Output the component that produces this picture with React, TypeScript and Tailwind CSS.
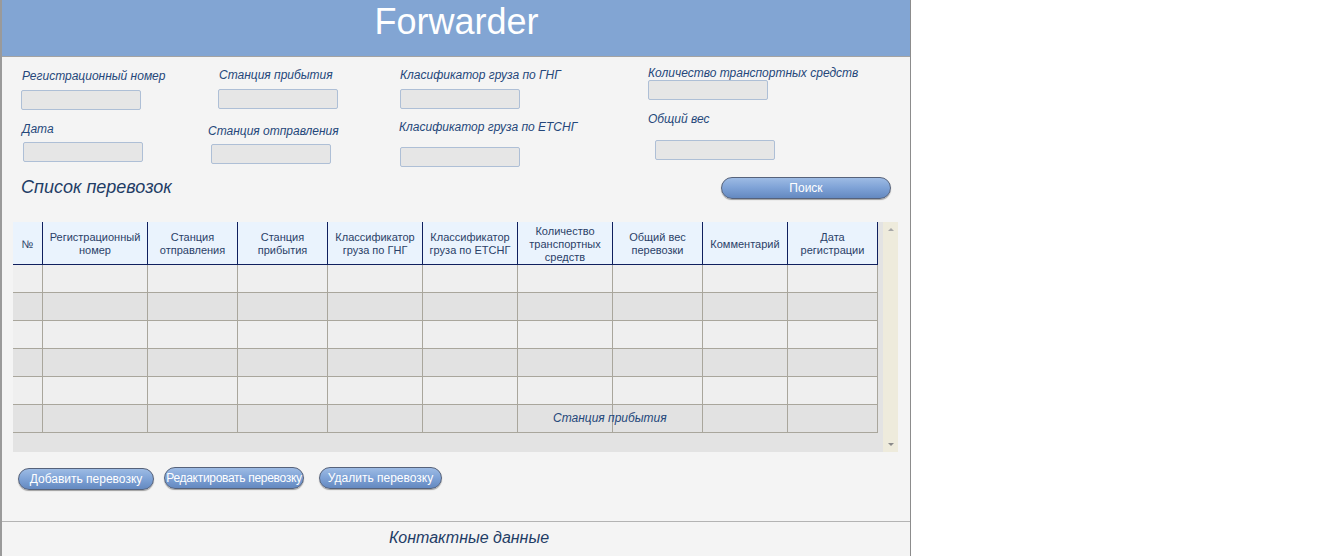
const labelCls = 'block text-[12px] leading-[14px] italic text-[#25477a] whitespace-nowrap'
const inputCls = 'block w-[120px] h-[20px] bg-[#e6e6e6] border border-[#aebfd6] rounded-[2px]'

const columns = [
  { title: '№', w: 'w-[30px]' },
  { title: 'Регистрационный номер', w: 'w-[105px]' },
  { title: 'Станция отправления', w: 'w-[90px]' },
  { title: 'Станция прибытия', w: 'w-[90px]' },
  { title: 'Классификатор груза по ГНГ', w: 'w-[95px]' },
  { title: 'Классификатор груза по ЕТСНГ', w: 'w-[95px]' },
  { title: 'Количество транспортных средств', w: 'w-[95px]' },
  { title: 'Общий вес перевозки', w: 'w-[90px]' },
  { title: 'Комментарий', w: 'w-[85px]' },
  { title: 'Дата регистрации', w: 'w-[90px]' },
]

const rows = [0, 1, 2, 3, 4, 5]

function PillButton({ label, className = '' }: { label: string; className?: string }) {
  return (
    <button
      className={`h-[22px] rounded-full border border-[#56627a] bg-gradient-to-b from-[#9dbbe4] via-[#7ea2d6] to-[#6489c0] text-white text-[12px] leading-[20px] whitespace-nowrap shadow-[0_1px_1px_rgba(0,0,0,0.35)] ${className}`}
    >
      {label}
    </button>
  )
}

export default function App() {
  return (
    <div className="w-[1342px] h-[556px] bg-white overflow-hidden" style={{ fontFamily: '"Liberation Sans", Arial, sans-serif' }}>
      <div className="w-[911px] h-[556px] flex flex-col bg-[#f4f4f4] border-l-2 border-r border-l-[#9a9a9a] border-r-[#8c8c8c]">
        {/* Header */}
        <div className="h-[57px] shrink-0 bg-[#82a5d3] border-b border-[#a3a3a3] flex items-start justify-center">
          <h1 className="text-white text-[36px] leading-[42px] pt-[1px] pl-[1px]">Forwarder</h1>
        </div>

        {/* Search form */}
        <div className="h-[110px] shrink-0 flex items-start">
          <div className="w-[187px] ml-[19px]">
            <span className={`${labelCls} mt-[12px] ml-[1px]`}>Регистрационный номер</span>
            <span className={`${inputCls} mt-[7px]`} />
            <span className={`${labelCls} mt-[12px] ml-[1px]`}>Дата</span>
            <span className={`${inputCls} mt-[6px] ml-[2px]`} />
          </div>
          <div className="w-[191px]">
            <span className={`${labelCls} mt-[11px] ml-[11px]`}>Станция прибытия</span>
            <span className={`${inputCls} mt-[7px] ml-[10px]`} />
            <span className={`${labelCls} mt-[15px]`}>Станция отправления</span>
            <span className={`${inputCls} mt-[6px] ml-[3px]`} />
          </div>
          <div className="w-[249px]">
            <span className={`${labelCls} mt-[11px] ml-[1px]`}>Класификатор груза по ГНГ</span>
            <span className={`${inputCls} mt-[7px] ml-[1px]`} />
            <span className={`${labelCls} mt-[11px]`}>Класификатор груза по ЕТСНГ</span>
            <span className={`${inputCls} mt-[13px] ml-[1px]`} />
          </div>
          <div className="flex-1">
            <span className={`${labelCls} mt-[9px]`}>Количество транспортных средств</span>
            <span className={`${inputCls} mt-0`} />
            <span className={`${labelCls} mt-[12px]`}>Общий вес</span>
            <span className={`${inputCls} mt-[14px] ml-[7px]`} />
          </div>
        </div>

        {/* List title + search */}
        <div className="h-[40px] shrink-0 flex items-center justify-between pl-[19px] pr-[19px]">
          <h2 className="text-[18px] italic text-[#1f3d66] leading-[22px]">Список перевозок</h2>
          <PillButton label="Поиск" className="w-[170px] mt-[1px]" />
        </div>

        {/* Table */}
        <div className="relative mt-[15px] ml-[11px] w-[885px] h-[230px] shrink-0 flex bg-[#e3e3e3]">
          <div className="w-[865px]">
            <div className="flex h-[43px] bg-[#eaf3fd] border-b border-[#10205e]">
              {columns.map((c) => (
                <div
                  key={c.title}
                  className={`${c.w} h-full border-r border-[#10205e] flex items-center justify-center text-center px-[3px] pt-[2px] text-[11px] leading-[13px] text-[#2a3f68]`}
                >
                  {c.title}
                </div>
              ))}
            </div>
            {rows.map((r) => (
              <div key={r} className={`flex h-[28px] border-b border-[#a9a69c] ${r % 2 === 0 ? 'bg-[#efefef]' : 'bg-[#e2e2e2]'}`}>
                {columns.map((c) => (
                  <div key={c.title} className={`${c.w} h-full border-r border-[#a9a69c]`} />
                ))}
              </div>
            ))}
          </div>
          <div className="w-[5px]" />
          <div className="w-[15px] h-full bg-[#eeebdc] flex flex-col items-center justify-between py-[6px]">
            <span className="w-0 h-0 border-l-[3px] border-r-[3px] border-b-[3px] border-l-transparent border-r-transparent border-b-[#a8a8a8]" />
            <span className="w-0 h-0 border-l-[3px] border-r-[3px] border-t-[3px] border-l-transparent border-r-transparent border-t-[#8a8a8a]" />
          </div>
          <span className="absolute left-[540px] top-[189px] text-[12px] leading-[14px] italic text-[#25477a]">Станция прибытия</span>
        </div>

        {/* Action buttons */}
        <div className="h-[23px] mt-[15px] shrink-0 flex items-start pl-[16px]">
          <PillButton label="Добавить перевозку" className="w-[136px] mt-[1px]" />
          <PillButton label="Редактировать перевозку" className="w-[140px] ml-[10px] px-0 tracking-[-0.3px]" />
          <PillButton label="Удалить перевозку" className="w-[123px] ml-[15px]" />
        </div>

        {/* Footer */}
        <div className="mt-[31px] border-t border-[#b3b3b3] flex-1 flex items-start justify-center">
          <span className="mt-[6px] ml-[26px] text-[16px] leading-[20px] italic text-[#1f3d66]">Контактные данные</span>
        </div>
      </div>
    </div>
  )
}
